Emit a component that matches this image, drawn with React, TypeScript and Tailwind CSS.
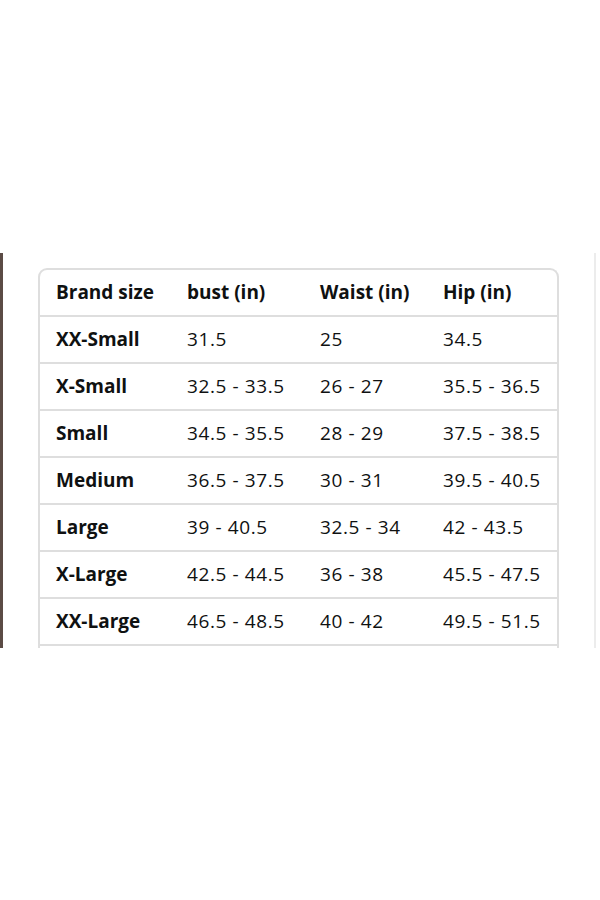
const rows: [string, string, string, string][] = [
  ['XX-Small', '31.5', '25', '34.5'],
  ['X-Small', '32.5 - 33.5', '26 - 27', '35.5 - 36.5'],
  ['Small', '34.5 - 35.5', '28 - 29', '37.5 - 38.5'],
  ['Medium', '36.5 - 37.5', '30 - 31', '39.5 - 40.5'],
  ['Large', '39 - 40.5', '32.5 - 34', '42 - 43.5'],
  ['X-Large', '42.5 - 44.5', '36 - 38', '45.5 - 47.5'],
  ['XX-Large', '46.5 - 48.5', '40 - 42', '49.5 - 51.5'],
];

const Row = ({ cells, head }: { cells: string[]; head?: boolean }) => (
  <div className="flex h-[47px] shrink-0 items-center border-b-2 border-[#dedede]">
    {cells.map((c, i) => (
      <div
        key={i}
        className={
          (i === 0 ? 'w-[131px] font-bold ' : i === 1 ? 'w-[133px] ' : i === 2 ? 'w-[123px] ' : 'flex-1 ') +
          (head || i === 0 ? 'font-bold ' : 'tracking-[0.6px] ') +
          'pl-[16px] whitespace-nowrap'
        }
      >
        {c}
      </div>
    ))}
  </div>
);

export default function App() {
  return (
    <div className="min-h-[900px] bg-white pt-[253px]" style={{ fontFamily: '"Open Sans", "Noto Sans", sans-serif' }}>
      <div className="flex h-[395px] overflow-hidden">
        <div className="w-[3px] bg-[#5b4b45]" />
        <div className="ml-[35px] w-[521px] pt-[15px]">
          <div className="flex h-[400px] flex-col rounded-t-[9px] border-2 border-b-0 border-[#dedede] text-[19px] text-[#0f1111]">
            <Row cells={['Brand size', 'bust (in)', 'Waist (in)', 'Hip (in)']} head />
            {rows.map((r) => (
              <Row key={r[0]} cells={r} />
            ))}
          </div>
        </div>
        <div className="ml-[35px] w-[2px] bg-[#ececec]" />
      </div>
    </div>
  );
}
